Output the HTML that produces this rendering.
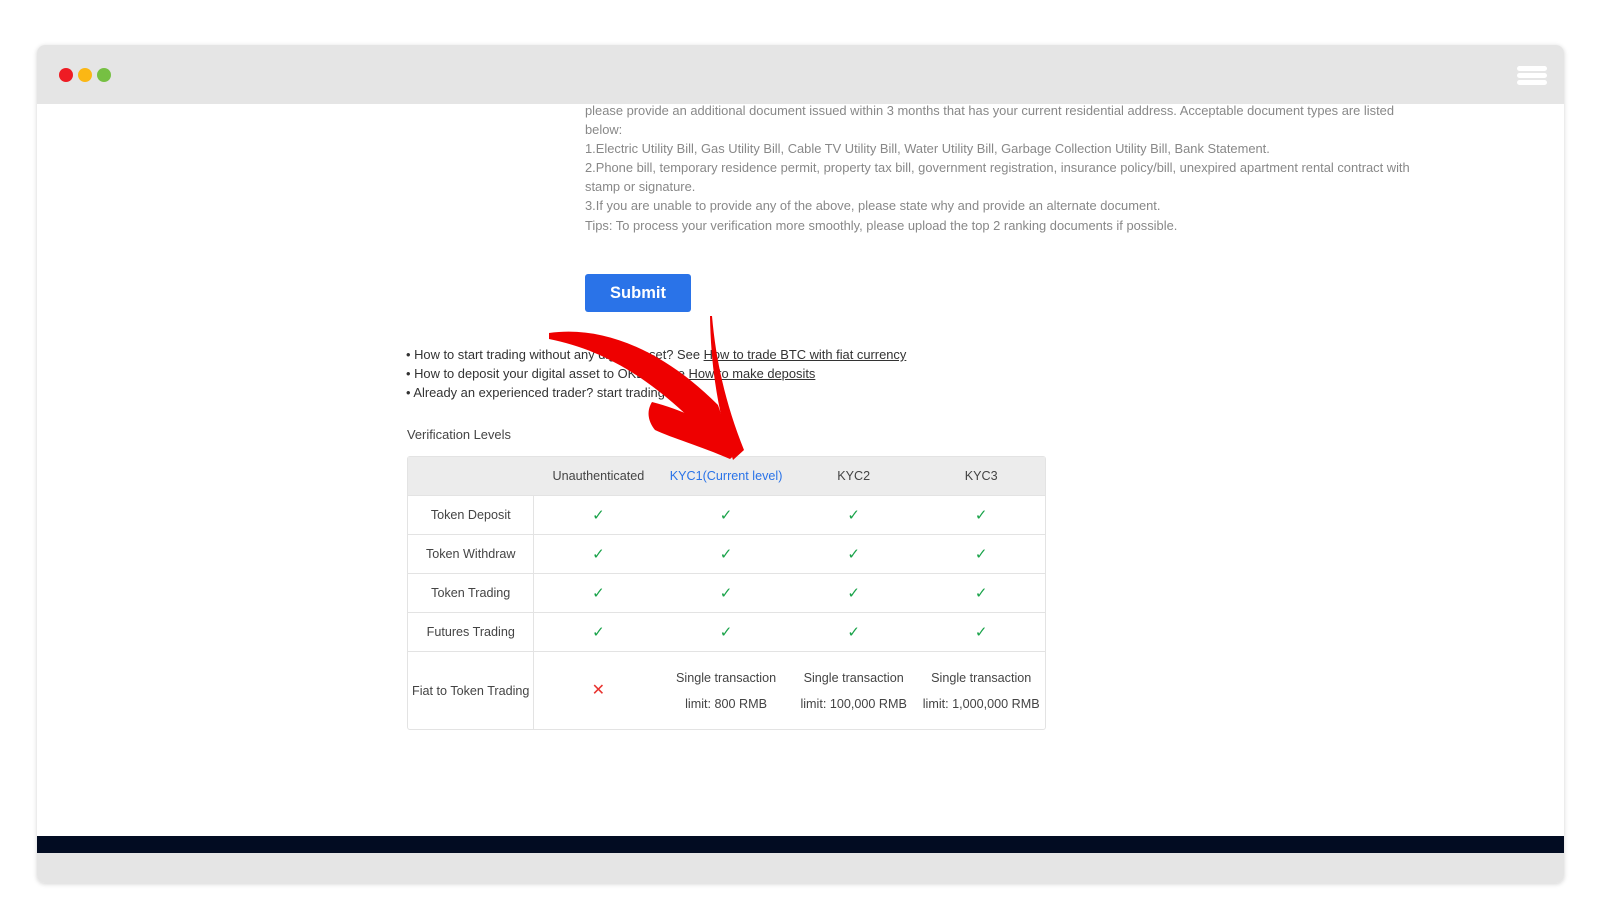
<!DOCTYPE html>
<html><head><meta charset="utf-8"><style>
*{margin:0;padding:0;box-sizing:border-box}
body{width:1600px;height:916px;background:#fff;position:relative;overflow:hidden;font-family:"Liberation Sans",Arial,sans-serif}
.win{position:absolute;left:37px;top:45px;width:1527px;height:838px;border-radius:8px;background:#fff;box-shadow:0 1px 5px rgba(0,0,0,.18);overflow:hidden}
.hdr{position:absolute;left:0;top:0;width:100%;height:59px;background:#e5e5e5}
.dot{position:absolute;top:23px;width:14px;height:14px;border-radius:50%}
.ham{position:absolute;left:1480px;width:30px;height:5px;border-radius:3px;background:#fff}
.t{position:absolute;left:585px;font-size:12.9px;color:#888;white-space:nowrap}
.b{position:absolute;left:406px;font-size:12.9px;color:#333;white-space:nowrap}
.b u{color:#333}
.btn{position:absolute;left:585px;top:274px;width:106px;height:38px;background:#2a73e8;border-radius:3px;color:#fff;font-size:16.5px;font-weight:bold;text-align:center;line-height:38px}
table{position:absolute;left:407px;top:456px;width:639px;border-collapse:separate;border-spacing:0;border:1px solid #e3e3e3;border-radius:3px;font-size:12.6px;color:#444}
td{text-align:center;border-top:1px solid #e3e3e3;height:39px;width:128px}
td:first-child{border-right:1px solid #e3e3e3;width:127px}
tr.h td{background:#ececec;border-top:none;height:38px}
tr.h td:first-child{border-right:none}
.ck{color:#1aa34a;font-size:15px}
.x{color:#e8332f;font-size:16px}
tr.l td{height:78px;line-height:26px}
</style></head><body>
<div class="win">
<div class="hdr">
<div class="dot" style="left:22px;background:#ee1c24"></div>
<div class="dot" style="left:41px;background:#fbb714"></div>
<div class="dot" style="left:60px;background:#76c043"></div>
<div class="ham" style="top:21px"></div><div class="ham" style="top:28px"></div><div class="ham" style="top:35px"></div>
</div>
<div style="position:absolute;left:0;top:791px;width:100%;height:17px;background:#020c22"></div>
<div style="position:absolute;left:0;top:808px;width:100%;height:30px;background:#e5e5e5"></div>
</div>
<div class="t" style="top:103px">please provide an additional document issued within 3 months that has your current residential address. Acceptable document types are listed</div>
<div class="t" style="top:122px">below:</div>
<div class="t" style="top:141px">1.Electric Utility Bill, Gas Utility Bill, Cable TV Utility Bill, Water Utility Bill, Garbage Collection Utility Bill, Bank Statement.</div>
<div class="t" style="top:160px">2.Phone bill, temporary residence permit, property tax bill, government registration, insurance policy/bill, unexpired apartment rental contract with</div>
<div class="t" style="top:179px">stamp or signature.</div>
<div class="t" style="top:198px">3.If you are unable to provide any of the above, please state why and provide an alternate document.</div>
<div class="t" style="top:218px">Tips: To process your verification more smoothly, please upload the top 2 ranking documents if possible.</div>
<div class="btn">Submit</div>
<div class="b" style="top:347px">• How to start trading without any digital asset? See <u>How to trade BTC with fiat currency</u></div>
<div class="b" style="top:366px">• How to deposit your digital asset to OKEx? See <u>How to make deposits</u></div>
<div class="b" style="top:385px">• Already an experienced trader? start trading now!</div>
<div class="b" style="left:407px;top:427px;color:#444">Verification Levels</div>
<table>
<tr class="h"><td></td><td>Unauthenticated</td><td style="color:#2a73e8">KYC1(Current level)</td><td>KYC2</td><td>KYC3</td></tr>
<tr><td>Token Deposit</td><td class="ck">✓</td><td class="ck">✓</td><td class="ck">✓</td><td class="ck">✓</td></tr>
<tr><td>Token Withdraw</td><td class="ck">✓</td><td class="ck">✓</td><td class="ck">✓</td><td class="ck">✓</td></tr>
<tr><td>Token Trading</td><td class="ck">✓</td><td class="ck">✓</td><td class="ck">✓</td><td class="ck">✓</td></tr>
<tr><td>Futures Trading</td><td class="ck">✓</td><td class="ck">✓</td><td class="ck">✓</td><td class="ck">✓</td></tr>
<tr class="l"><td>Fiat to Token Trading</td><td class="x">✕</td><td>Single transaction<br>limit: 800 RMB</td><td>Single transaction<br>limit: 100,000 RMB</td><td>Single transaction<br>limit: 1,000,000 RMB</td></tr>
</table>
<svg width="1600" height="916" style="position:absolute;left:0;top:0">
<path fill="#e00" d="M549,333 C605,325 665,352 718,405 L735,455 L700,428 C652,380 605,350 549,339 Z"/>
<path fill="#e00" d="M652,402 C682,410 708,420 738,452 L730,459 C700,446 672,438 655,430 C647,420 647,410 652,402 Z"/>
<path fill="#e00" d="M712,316 C716,362 726,405 744,450 L733,460 C720,418 711,375 710,316 Z"/>
</svg>
</body></html>
